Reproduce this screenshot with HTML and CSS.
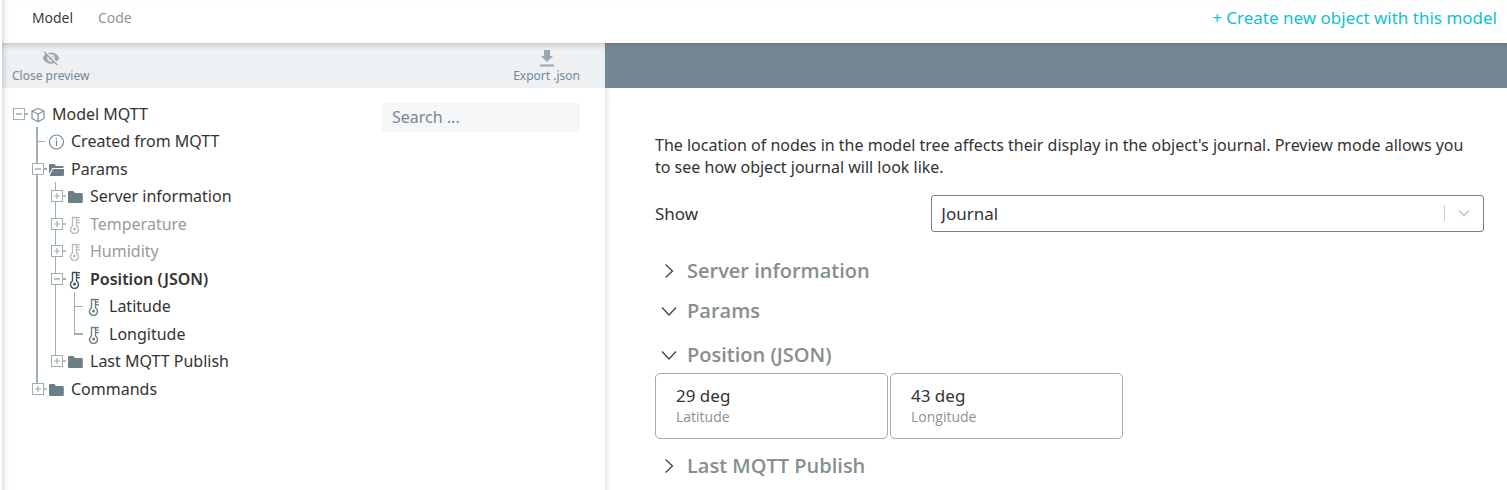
FILE: index.html
```html
<!DOCTYPE html>
<html lang="en">
<head>
<meta charset="utf-8">
<title>Model MQTT</title>
<link rel="stylesheet" href="styles.css">
</head>
<body>
<svg class="sprite" aria-hidden="true">
  <symbol id="minus" viewBox="0 0 19 28"><path d="M16 14h3" stroke="#9fb0b3" stroke-width="2"/><rect x="4.5" y="8.500" width="11" height="11" fill="#fff" stroke="#9fb0b3"/><path d="M7 14h6" stroke="#9fb0b3" stroke-width="1.500"/></symbol>
  <symbol id="plus" viewBox="0 0 19 28"><path d="M16 14h3" stroke="#9fb0b3" stroke-width="1.500"/><rect x="4.500" y="8.500" width="11" height="11" fill="#fff" stroke="#9fb0b3"/><path d="M7 14h6M10 11v6" stroke="#9fb0b3" stroke-width="1.200"/></symbol>
  <symbol id="cube" viewBox="0 0 16 16"><path d="M8 1.500 14 4v7.500L8 14.700 2 11.500V4zM2 4l6 3 6-3M8 7v7.500" fill="none" stroke="#8194a0" stroke-width="1.300" stroke-linejoin="round"/></symbol>
  <symbol id="info" viewBox="0 0 16 16"><circle cx="7.500" cy="8" r="7" fill="none" stroke="#6f8592" stroke-width="1.100"/><path d="M7.500 6.500V12M7.500 4v1.300" stroke="#6f8592" stroke-width="1.200"/></symbol>
  <symbol id="folder" viewBox="0 0 16 16"><path d="M0 3.300Q0 2 1.300 2h4L7 4h6.500q1.300 0 1.300 1.300v7.400Q14.800 14 13.500 14H1.300Q0 14 0 12.700z" fill="#6b7f86"/></symbol>
  <symbol id="folder-open" viewBox="0 0 16 16"><path d="M0 3.300Q0 2 1.300 2h4L7 4h6.500q1 0 1 1v1H3.500L0 12z" fill="#6b7f86"/><path d="M4 7h11v6q0 1-1.300 1H.5z" fill="#6b7f86"/></symbol>
  <symbol id="thermo" viewBox="0 0 16 18"><path d="M4.500 10V1.500h4V10a4 4 0 1 1-4 0z" fill="none" stroke="currentColor" stroke-width="1.400"/><circle cx="6.500" cy="13" r="1.500" fill="currentColor"/><path d="M8.500 1.700H12M8.500 4.200H11.500M8.500 6.700H12" stroke="currentColor" stroke-width="1.300"/></symbol>
  <symbol id="right" viewBox="0 0 16 16"><path d="m4.500 1.500 7 6.500-7 6.500" fill="none" stroke="#3b444d" stroke-width="1.300"/></symbol>
  <symbol id="down" viewBox="0 0 16 16"><path d="M1 4.500 8 12l7-7.500" fill="none" stroke="#3b444d" stroke-width="1.300"/></symbol>
</svg>

<header class="topbar">
  <nav class="tabs">
    <a class="tab tab-active" href="#model">Model</a>
    <a class="tab" href="#code">Code</a>
  </nav>
  <a class="create" href="#create">+ Create new object with this model</a>
</header>

<div class="workspace">
  <aside class="side">
    <div class="toolbar">
      <button class="tool" type="button">
        <svg width="18" height="18" viewBox="0 0 24 24" fill="#9aa6b0"><path d="M12 7c2.760 0 5 2.240 5 5 0 .65-.13 1.260-.36 1.830l2.920 2.920c1.510-1.260 2.700-2.890 3.430-4.750-1.730-4.390-6-7.500-11-7.500-1.400 0-2.740.25-3.980.7l2.160 2.160C10.740 7.130 11.350 7 12 7zM2 4.270l2.280 2.280.46.46C3.080 8.300 1.780 10.020 1 12c1.730 4.390 6 7.500 11 7.500 1.550 0 3.030-.3 4.380-.84l.42.42L19.730 22 21 20.730 3.270 3 2 4.270zM7.530 9.800l1.550 1.550c-.05.21-.08.43-.08.65 0 1.660 1.340 3 3 3 .22 0 .44-.03.65-.08l1.550 1.550c-.67.33-1.410.53-2.200.53-2.760 0-5-2.240-5-5 0-.79.2-1.530.53-2.200zm4.310-.78l3.150 3.150.02-.16c0-1.660-1.340-3-3-3l-.17.01z"/></svg>
        <span>Close preview</span>
      </button>
      <button class="tool" type="button">
        <svg width="18" height="18" viewBox="0 0 18 18" fill="#9aa6b0"><path d="M6 1h6v6h3l-6 6-6-6h3zM2 15.500h14v2H2z"/></svg>
        <span>Export .json</span>
      </button>
    </div>
    <div class="side-body">
      <ul class="tree">
        <li class="node root"><button class="toggle" aria-label="Collapse Model MQTT"><svg><use href="#minus"/></svg></button><svg class="icon"><use href="#cube"/></svg><span>Model MQTT</span></li>
        <li class="node"><i class="guide wide tee"></i><svg class="icon"><use href="#info"/></svg><span>Created from MQTT</span></li>
        <li class="node"><button class="toggle guide wide" aria-label="Collapse Params"><svg><use href="#minus"/></svg></button><svg class="icon"><use href="#folder-open"/></svg><span>Params</span></li>
        <li class="node"><i class="guide wide"></i><button class="toggle guide" aria-label="Expand Server information"><svg><use href="#plus"/></svg></button><svg class="icon"><use href="#folder"/></svg><span>Server information</span></li>
        <li class="node muted"><i class="guide wide"></i><button class="toggle guide" aria-label="Expand Temperature"><svg><use href="#plus"/></svg></button><svg class="icon thermo"><use href="#thermo"/></svg><span>Temperature</span></li>
        <li class="node muted"><i class="guide wide"></i><button class="toggle guide" aria-label="Expand Humidity"><svg><use href="#plus"/></svg></button><svg class="icon thermo"><use href="#thermo"/></svg><span>Humidity</span></li>
        <li class="node selected"><i class="guide wide"></i><button class="toggle guide" aria-label="Collapse Position (JSON)"><svg><use href="#minus"/></svg></button><svg class="icon thermo"><use href="#thermo"/></svg><span>Position (JSON)</span></li>
        <li class="node"><i class="guide wide"></i><i class="guide"></i><i class="guide tee"></i><svg class="icon thermo"><use href="#thermo"/></svg><span>Latitude</span></li>
        <li class="node"><i class="guide wide"></i><i class="guide"></i><i class="guide elbow"></i><svg class="icon thermo"><use href="#thermo"/></svg><span>Longitude</span></li>
        <li class="node"><i class="guide wide"></i><button class="toggle guide end" aria-label="Expand Last MQTT Publish"><svg><use href="#plus"/></svg></button><svg class="icon"><use href="#folder"/></svg><span>Last MQTT Publish</span></li>
        <li class="node"><button class="toggle guide wide end" aria-label="Expand Commands"><svg><use href="#plus"/></svg></button><svg class="icon"><use href="#folder"/></svg><span>Commands</span></li>
      </ul>
      <input class="search" type="search" placeholder="Search ..." aria-label="Search">
    </div>
  </aside>

  <main class="main">
    <div class="banner"></div>
    <div class="preview">
      <p class="hint">The location of nodes in the model tree affects their display in the object's journal. Preview mode allows you to see how object journal will look like.</p>
      <div class="field">
        <label for="show">Show</label>
        <div class="select-box">
          <select id="show"><option>Journal</option></select>
          <svg class="select-mark" width="40" height="16" viewBox="0 0 40 16" fill="none" stroke="#ccc"><path d="M.5 0v16"/><path d="m15 5.500 5 5 5-5" stroke-width="1.800"/></svg>
        </div>
      </div>
      <section class="group"><h2><button type="button"><svg><use href="#right"/></svg>Server information</button></h2></section>
      <section class="group"><h2><button type="button"><svg><use href="#down"/></svg>Params</button></h2></section>
      <section class="group open">
        <h2><button type="button"><svg><use href="#down"/></svg>Position (JSON)</button></h2>
        <div class="cards">
          <div class="card"><div class="value">29 deg</div><div class="name">Latitude</div></div>
          <div class="card"><div class="value">43 deg</div><div class="name">Longitude</div></div>
        </div>
      </section>
      <section class="group"><h2><button type="button"><svg><use href="#right"/></svg>Last MQTT Publish</button></h2></section>
    </div>
  </main>
</div>
</body>
</html>
```

FILE: styles.css
```css
* { box-sizing: border-box; }
body {
  margin: 0;
  min-height: 100vh;
  display: flex;
  flex-direction: column;
  font: 16px/22px "Noto Sans", "Open Sans", sans-serif;
  color: #333;
  background: #fff;
  overflow: hidden;
}
button, input, select { font: inherit; color: inherit; border: 0; margin: 0; padding: 0; background: none; }
button { cursor: pointer; }
a { text-decoration: none; }
.sprite { display: none; }
.tabs, .name, .group h2 { font-family: "Open Sans", "Noto Sans", sans-serif; }

.topbar {
  display: flex;
  justify-content: space-between;
  align-items: center;
  height: 43px;
  margin-left: 2px;
  padding: 0 10px 7px 30px;
  box-shadow: inset 6px 0 6px -5px rgba(0, 0, 0, .2);
}
.tabs { display: flex; gap: 25px; font-size: 14px; }
.tab { color: #8a8f90; }
.tab-active { color: #333; }
.create { font-size: 17px; color: #12bfcf; }

.workspace { display: flex; flex: 1; margin-left: 2px; }
.side {
  flex: 0 0 603px;
  box-shadow: inset 6px 0 6px -5px rgba(0, 0, 0, .2);
}
.toolbar {
  display: flex;
  justify-content: space-between;
  align-items: flex-start;
  height: 45px;
  padding: 6px 25px 0 10px;
  background: #edf1f4;
  box-shadow: inset 0 6px 6px -4px rgba(0, 0, 0, .18), inset 6px 0 6px -5px rgba(0, 0, 0, .2);
}
.tool {
  display: flex;
  flex-direction: column;
  align-items: center;
  font-size: 12px;
  line-height: 18px;
  color: #748894;
}
.side-body {
  display: flex;
  justify-content: space-between;
  align-items: flex-start;
  padding: 12px 25px 0 7px;
}
.search {
  width: 198px;
  height: 29px;
  margin-top: 3px;
  padding: 0 10px 2px;
  border-radius: 2px;
  background: #f5f6f8;
  outline: 0;
}
.search::placeholder { color: #748894; opacity: 1; }

.tree {
  display: grid;
  grid-auto-rows: 27px 28px;
  margin: 0;
  padding: 0;
  list-style: none;
}
.node { display: flex; align-items: center; padding-left: 19px; white-space: nowrap; }
.root { padding-left: 0; }
.toggle, .guide { --line: 1px; flex: 0 0 19px; height: 100%; }
.toggle svg { display: block; width: 19px; height: 28px; }
.guide { background: linear-gradient(#9fb0b3, #9fb0b3) 8px 0 / var(--line) 100% no-repeat; }
.wide { --line: 2px; }
.end { background-size: var(--line) 50%; }
.tee {
  background:
    linear-gradient(#9fb0b3, #9fb0b3) 8px 0 / var(--line) 100% no-repeat,
    linear-gradient(#9fb0b3, #9fb0b3) 8px 14px / 9px 1px no-repeat;
}
.elbow {
  background:
    linear-gradient(#9fb0b3, #9fb0b3) 8px 0 / 1px 14px no-repeat,
    linear-gradient(#9fb0b3, #9fb0b3) 8px 13px / 9px 2px no-repeat;
}
.icon { width: 16px; height: 16px; margin: 2px 6px 0 2px; }
.thermo { height: 18px; color: #6b7f86; }
.muted { color: #9a9a9a; }
.muted .thermo { color: #b4bec2; }
.selected { font-weight: 600; }
.selected .thermo { color: #3f5662; }

.main { flex: 1; min-width: 0; box-shadow: inset 6px 0 6px -5px rgba(0, 0, 0, .15); }
.banner { height: 45px; background: #748794; box-shadow: inset 0 5px 5px -4px rgba(0, 0, 0, .18); }
.preview { padding: 46px 23px 0 50px; }
.hint { margin: 0 0 17px; padding-right: 8px; }
.field {
  display: grid;
  grid-template-columns: 1fr 2fr;
  align-items: center;
  margin-bottom: 24px;
  font-size: 17px;
}
.select-box { position: relative; }
.select-box select {
  display: block;
  width: 100%;
  height: 37px;
  padding: 0 50px 0 9px;
  border: 1px solid #71808c;
  border-radius: 3px;
  appearance: none;
}
.select-mark { position: absolute; right: 0; top: 10px; pointer-events: none; }

.group { margin-bottom: 10px; }
.group h2 { margin: 0; font-size: 20px; line-height: 30px; font-weight: 600; color: #868e90; }
.group button { display: flex; align-items: center; gap: 10px; }
.group button svg { width: 16px; height: 16px; margin-left: 6px; }
.open { padding-top: 4px; margin-bottom: 12px; }
.cards { display: flex; gap: 2px; margin-top: 3px; }
.card {
  flex: 0 1 233px;
  height: 66px;
  padding: 12px 20px;
  border: 1px solid #a3abb0;
  border-radius: 5px;
}
.value { font-size: 17px; line-height: 20px; }
.name { font-size: 14px; line-height: 22px; color: #8a9294; }
```
